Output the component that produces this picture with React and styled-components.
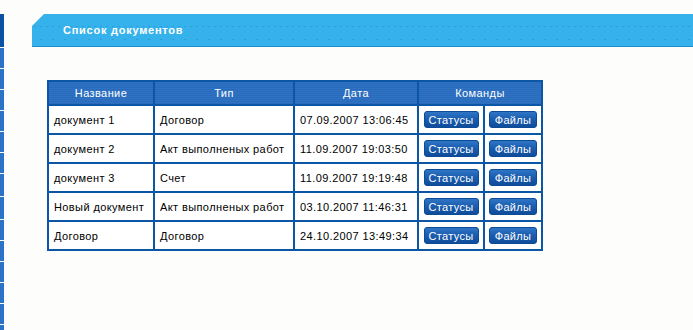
import React from 'react';
import styled, { createGlobalStyle } from 'styled-components';

const GlobalStyle = createGlobalStyle`
  body {
    margin: 0;
    background: #fdfdfb;
    font-family: "Liberation Sans", Arial, sans-serif;
  }
`;

const Page = styled.div`
  display: flex;
  align-items: flex-start;
  padding-top: 14px;
  min-height: 316px;
`;

const Strip = styled.div`
  width: 4px;
  display: flex;
  flex-direction: column;
  gap: 1px;
`;

const StripPiece = styled.div`
  height: ${(p) => p.h}px;
  background: ${(p) => (p.dark ? '#0b52a3' : '#2c72c6')};
`;

const Main = styled.div`
  flex: 1;
  margin-left: 28px;
`;

const TitleBar = styled.div`
  height: 32px;
  display: flex;
  align-items: center;
  padding-left: 31px;
  background-color: #35b1ec;
  background-image:
    radial-gradient(circle, #2c9fd9 0.5px, transparent 0.8px),
    radial-gradient(circle, #2c9fd9 0.5px, transparent 0.8px);
  background-size: 6px 3px, 12px 3px;
  background-position: 0 11px, 3px 24px;
  background-repeat: repeat-x;
  border-bottom: 1px solid #1d8fcf;
  clip-path: polygon(12px 0, 100% 0, 100% 100%, 0 100%, 0 12px);
  color: #fff;
  font-weight: bold;
  font-size: 11px;
  letter-spacing: 0.75px;
`;

const Table = styled.table`
  margin: 33px 0 0 15px;
  border-collapse: collapse;
  border: 2px solid #0b57a6;
  font-size: 11px;
  letter-spacing: 0.4px;
  color: #000;
  background: #fff;
`;

const Th = styled.th`
  height: 22px;
  padding: 0;
  border: 2px solid #0b57a6;
  font-weight: normal;
  color: #fff;
  text-align: center;
  background: repeating-linear-gradient(
    to bottom,
    #2e72c3 0px,
    #2e72c3 1px,
    #2a6bbb 1px,
    #2a6bbb 2px
  );
  width: ${(p) => p.w}px;
`;

const Td = styled.td`
  height: 27px;
  padding: 0 0 0 5px;
  border: 2px solid #0b57a6;
  white-space: nowrap;
  text-align: left;
`;

const BtnCell = styled.td`
  height: 27px;
  padding: 0;
  border: 2px solid #0b57a6;
  text-align: center;
  width: ${(p) => p.w}px;
`;

const Button = styled.button`
  height: 17px;
  width: ${(p) => p.w}px;
  padding: 0;
  border: 1px solid #0c4b95;
  border-radius: 3px;
  background: linear-gradient(to bottom, #2f75c6 0%, #1a5cae 50%, #0f4d9b 100%);
  color: #fff;
  font-family: "Liberation Sans", Arial, sans-serif;
  font-size: 11px;
  letter-spacing: 0.3px;
  vertical-align: middle;
  cursor: pointer;
`;

const docs = [
  ['документ 1', 'Договор', '07.09.2007 13:06:45'],
  ['документ 2', 'Акт выполненых работ', '11.09.2007 19:03:50'],
  ['документ 3', 'Счет', '11.09.2007 19:19:48'],
  ['Новый документ', 'Акт выполненых работ', '03.10.2007 11:46:31'],
  ['Договор', 'Договор', '24.10.2007 13:49:34'],
];

const strip = [33, 20, 20, 20, 20, 20, 20, 22, 22, 20, 20, 20, 20, 20, 6];

export default function App() {
  return (
    <>
      <GlobalStyle />
      <Page>
        <Strip>
          {strip.map((h, i) => (
            <StripPiece key={i} h={h} dark={i === 0} />
          ))}
        </Strip>
        <Main>
          <TitleBar>Список документов</TitleBar>
          <Table>
            <thead>
              <tr>
                <Th w={104}>Название</Th>
                <Th w={138}>Тип</Th>
                <Th w={122}>Дата</Th>
                <Th colSpan={2}>Команды</Th>
              </tr>
            </thead>
            <tbody>
              {docs.map((d, i) => (
                <tr key={i}>
                  <Td>{d[0]}</Td>
                  <Td>{d[1]}</Td>
                  <Td>{d[2]}</Td>
                  <BtnCell w={64}>
                    <Button w={55}>Статусы</Button>
                  </BtnCell>
                  <BtnCell w={56}>
                    <Button w={48}>Файлы</Button>
                  </BtnCell>
                </tr>
              ))}
            </tbody>
          </Table>
        </Main>
      </Page>
    </>
  );
}
